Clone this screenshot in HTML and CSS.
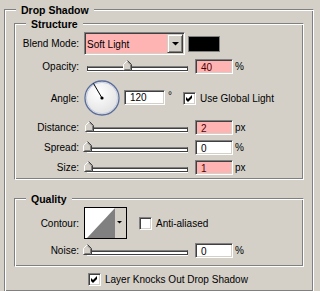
FILE: index.html
```html
<!DOCTYPE html>
<html>
<head>
<meta charset="utf-8">
<title>Drop Shadow</title>
<link rel="stylesheet" href="styles.css">
</head>
<body>
<div class="panel">
  <div class="group outer">
    <div class="legend legend-outer">Drop Shadow</div>

    <div class="group structure">
      <div class="legend">Structure</div>

      <div class="row r-blend">
        <span class="label">Blend Mode:</span>
        <div class="select">
          <span class="select-text">Soft Light</span>
          <span class="select-btn">
            <svg width="7" height="4" viewBox="0 0 7 4"><polygon points="0,0 7,0 3.5,3.5" fill="#000"/></svg>
          </span>
        </div>
        <span class="swatch"></span>
      </div>

      <div class="row r-opacity">
        <span class="label">Opacity:</span>
        <div class="slider">
          <div class="track"></div>
          <span class="thumb" style="left:40px"><svg width="9" height="11" viewBox="0 0 9 11"><polygon points="0.5,10.5 0.5,4.5 4.5,0.5 8.5,4.5 8.5,10.5" fill="#d4d0c8"/><polyline points="0.5,10 0.5,4.5 4.5,0.5" fill="none" stroke="#fff"/><polyline points="4.5,0.5 8.5,4.5 8.5,10.5 0.5,10.5" fill="none" stroke="#404040"/><polyline points="4.5,1.8 7.5,4.8 7.5,9.5 1.5,9.5" fill="none" stroke="#808080"/></svg></span>
        </div>
        <span class="field pink">40</span>
        <span class="unit">%</span>
      </div>

      <div class="row r-angle">
        <span class="label">Angle:</span>
        <svg class="dial" width="36" height="36" viewBox="0 0 36 36">
          <defs>
            <radialGradient id="dg" cx="40%" cy="35%" r="70%">
              <stop offset="0" stop-color="#ffffff"/>
              <stop offset="1" stop-color="#e0e0e0"/>
            </radialGradient>
          </defs>
          <circle cx="18" cy="18" r="17" fill="url(#dg)" stroke="#5a6c98" stroke-width="1.3"/>
          <circle cx="18" cy="18" r="15.7" fill="none" stroke="#c5cde0" stroke-width="1"/>
          <line x1="18" y1="18" x2="9.5" y2="3.5" stroke="#000" stroke-width="1"/>
          <circle cx="18" cy="18" r="1.6" fill="#000"/>
        </svg>
        <span class="field angle-field">120</span>
        <span class="deg">°</span>
        <span class="check checked"><svg width="7" height="7" viewBox="0 0 7 7"><path d="M0 2 L2 4 L6 0 L6 3 L2 7 L0 5 Z" fill="#000"/></svg></span>
        <span class="check-label">Use Global Light</span>
      </div>

      <div class="row r-distance">
        <span class="label">Distance:</span>
        <div class="slider">
          <div class="track"></div>
          <span class="thumb" style="left:2px"><svg width="9" height="11" viewBox="0 0 9 11"><polygon points="0.5,10.5 0.5,4.5 4.5,0.5 8.5,4.5 8.5,10.5" fill="#d4d0c8"/><polyline points="0.5,10 0.5,4.5 4.5,0.5" fill="none" stroke="#fff"/><polyline points="4.5,0.5 8.5,4.5 8.5,10.5 0.5,10.5" fill="none" stroke="#404040"/><polyline points="4.5,1.8 7.5,4.8 7.5,9.5 1.5,9.5" fill="none" stroke="#808080"/></svg></span>
        </div>
        <span class="field pink">2</span>
        <span class="unit">px</span>
      </div>

      <div class="row r-spread">
        <span class="label">Spread:</span>
        <div class="slider">
          <div class="track"></div>
          <span class="thumb" style="left:0px"><svg width="9" height="11" viewBox="0 0 9 11"><polygon points="0.5,10.5 0.5,4.5 4.5,0.5 8.5,4.5 8.5,10.5" fill="#d4d0c8"/><polyline points="0.5,10 0.5,4.5 4.5,0.5" fill="none" stroke="#fff"/><polyline points="4.5,0.5 8.5,4.5 8.5,10.5 0.5,10.5" fill="none" stroke="#404040"/><polyline points="4.5,1.8 7.5,4.8 7.5,9.5 1.5,9.5" fill="none" stroke="#808080"/></svg></span>
        </div>
        <span class="field">0</span>
        <span class="unit">%</span>
      </div>

      <div class="row r-size">
        <span class="label">Size:</span>
        <div class="slider">
          <div class="track"></div>
          <span class="thumb" style="left:1px"><svg width="9" height="11" viewBox="0 0 9 11"><polygon points="0.5,10.5 0.5,4.5 4.5,0.5 8.5,4.5 8.5,10.5" fill="#d4d0c8"/><polyline points="0.5,10 0.5,4.5 4.5,0.5" fill="none" stroke="#fff"/><polyline points="4.5,0.5 8.5,4.5 8.5,10.5 0.5,10.5" fill="none" stroke="#404040"/><polyline points="4.5,1.8 7.5,4.8 7.5,9.5 1.5,9.5" fill="none" stroke="#808080"/></svg></span>
        </div>
        <span class="field pink">1</span>
        <span class="unit">px</span>
      </div>
    </div>

    <div class="group quality">
      <div class="legend">Quality</div>

      <div class="row r-contour">
        <span class="label">Contour:</span>
        <div class="contour">
          <svg width="41" height="30" viewBox="0 0 41 30">
            <rect x="0" y="0" width="30" height="30" fill="#fff"/>
            <polygon points="2,30 30,0 30,30" fill="#808080"/>
            <rect x="30" y="0" width="11" height="30" fill="#d4d0c8"/>
            <polygon points="32,13 37,13 34.5,15.5" fill="#000"/>
          </svg>
        </div>
        <span class="check aa"></span>
        <span class="check-label">Anti-aliased</span>
      </div>

      <div class="row r-noise">
        <span class="label">Noise:</span>
        <div class="slider">
          <div class="track"></div>
          <span class="thumb" style="left:0px"><svg width="9" height="11" viewBox="0 0 9 11"><polygon points="0.5,10.5 0.5,4.5 4.5,0.5 8.5,4.5 8.5,10.5" fill="#d4d0c8"/><polyline points="0.5,10 0.5,4.5 4.5,0.5" fill="none" stroke="#fff"/><polyline points="4.5,0.5 8.5,4.5 8.5,10.5 0.5,10.5" fill="none" stroke="#404040"/><polyline points="4.5,1.8 7.5,4.8 7.5,9.5 1.5,9.5" fill="none" stroke="#808080"/></svg></span>
        </div>
        <span class="field">0</span>
        <span class="unit">%</span>
      </div>
    </div>

    <div class="row r-knock">
      <span class="check checked"><svg width="7" height="7" viewBox="0 0 7 7"><path d="M0 2 L2 4 L6 0 L6 3 L2 7 L0 5 Z" fill="#000"/></svg></span>
      <span class="check-label">Layer Knocks Out Drop Shadow</span>
    </div>
  </div>
</div>
</body>
</html>
```

FILE: styles.css
```css
* { box-sizing: border-box; }

html, body {
  margin: 0;
  padding: 0;
}

body {
  width: 320px;
  height: 291px;
  overflow: hidden;
  background: #d4d0c8;
  color: #000;
  font-family: "Liberation Sans", Arial, sans-serif;
  font-size: 10px;
  line-height: 13px;
}

.panel {
  padding: 9px 0 0 4px;
}

/* etched group box */
.group {
  border: 1px solid;
  border-color: #808080 #fff #fff #808080;
  box-shadow: inset 1px 1px #fff, inset -1px -1px #808080;
}

.legend {
  width: max-content;
  margin: -6px 0 0 11px;
  padding: 0 5px;
  background: #d4d0c8;
  font-weight: bold;
  font-size: 10.5px;
  line-height: 13px;
}

.outer {
  width: 310px;
  padding: 0 9px 5px 9px;
}

.legend-outer {
  margin-left: 2px;
}

.structure {
  margin-top: 6px;
  padding-bottom: 4px;
}

.quality {
  margin-top: 18px;
  padding-bottom: 8px;
}

/* rows */
.row {
  display: flex;
  align-items: center;
}

.label {
  width: 64px;
  margin-right: 5px;
  text-align: right;
  white-space: nowrap;
}

.r-blend    { height: 23px; margin-top: 1px; }
.r-opacity  { height: 15px; margin-top: 4px; }
.r-angle    { height: 36px; margin-top: 6px; }
.r-distance { height: 15px; margin-top: 4px; }
.r-spread   { height: 15px; margin-top: 5px; }
.r-size     { height: 15px; margin-top: 5px; }
.r-contour  { height: 32px; margin-top: 1px; }
.r-noise    { height: 15px; margin-top: 4px; }
.r-knock    { height: 13px; margin-top: 6px; padding-left: 74px; }

/* combo box */
.select {
  width: 101px;
  height: 23px;
  display: flex;
  border: 1px solid;
  border-color: #808080 #fff #fff #808080;
  box-shadow: inset 1px 1px #404040, inset -1px -1px #d4d0c8;
  padding: 1px;
  background: #ffb4b4;
}

.select-text {
  flex: 1;
  display: flex;
  align-items: center;
  padding: 1px 0 0 1px;
  color: #000;
}

.select-btn {
  width: 16px;
  height: 19px;
  display: flex;
  align-items: center;
  justify-content: center;
  background: #d4d0c8;
  border: 1px solid;
  border-color: #d4d0c8 #404040 #404040 #d4d0c8;
  box-shadow: inset 1px 1px #fff, inset -1px -1px #808080;
}

.select-btn svg { display: block; margin-top: 1px; }

.swatch {
  width: 32px;
  height: 16px;
  margin-left: 3px;
  background: #000;
  border: 1px solid #808080;
}

/* slider */
.slider {
  position: relative;
  width: 108px;
  height: 15px;
  margin-left: -1px;
}

.track {
  width: 101px;
  height: 5px;
  margin: 7px 0 0 4px;
  background: #fff;
  border: 1px solid #404040;
  border-top-color: #808080;
  box-shadow: inset 0 1px #404040, 0 1px #fff;
}

.thumb {
  position: absolute;
  top: 1px;
  width: 9px;
  height: 11px;
}

.thumb svg { display: block; }

/* edit fields */
.field {
  width: 38px;
  height: 15px;
  margin-left: 4px;
  display: flex;
  align-items: center;
  padding: 1px 0 0 5px;
  background: #fff;
  border: 1px solid;
  border-color: #808080 #fff #fff #808080;
  box-shadow: inset 1px 1px #404040, inset -1px -1px #d4d0c8;
}

.field.pink {
  background: #ffb4b4;
  color: #500000;
}

.unit {
  margin-left: 2px;
}

.angle-field {
  width: 41px;
  margin-left: 4px;
  margin-top: -2px;
}

.deg {
  margin-left: 3px;
  margin-top: -6px;
  width: 4px;
}

.dial { display: block; }

/* check boxes */
.check {
  width: 13px;
  height: 13px;
  display: flex;
  align-items: center;
  justify-content: center;
  background: #fff;
  border: 1px solid;
  border-color: #808080 #fff #fff #808080;
  box-shadow: inset 1px 1px #404040, inset -1px -1px #d4d0c8;
}

.check svg { display: block; }

.r-angle .check { margin-left: 11px; }

.check-label {
  margin-left: 4px;
  white-space: nowrap;
}

/* contour picker */
.contour {
  width: 43px;
  height: 32px;
  border: 1px solid #000;
}

.contour svg { display: block; }

.check.aa { margin-left: 12px; }
```
